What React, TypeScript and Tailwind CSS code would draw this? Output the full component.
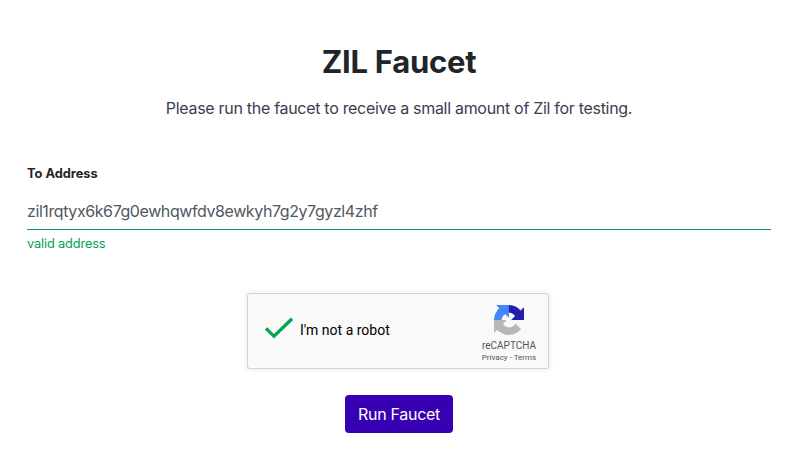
function Recaptcha() {
  return (
    <div className="flex h-[76px] w-[302px] justify-between rounded-[3px] border border-[#d3d3d3] bg-[#f9f9f9] pr-[11px] pl-4 font-[Roboto,sans-serif] shadow-[0_0_4px_1px_rgba(0,0,0,0.08)]">
      <div className="flex items-center">
        <svg className="mt-[-6px] h-[24px] w-[30px]" viewBox="0 0 30 24" fill="none" stroke="#00a651" strokeWidth="3.3" aria-hidden="true">
          <path d="M2 12.3L10 20.3L28 2.8" />
        </svg>
        <span className="mt-[-2px] ml-[6px] text-[14px] leading-[17px] text-black">I'm not a robot</span>
      </div>
      <div className="flex w-[56px] flex-col items-center pt-[11px] text-[#555]">
        <svg className="h-[30px] w-[30px]" viewBox="0 0 64 64" aria-hidden="true">
          <path fill="#221fac" d="M64 31.955c-.002-.46-.012-.918-.033-1.373V4.63l-7.174 7.174C50.893 4.617 41.961.038 31.957.038c-10.409 0-19.657 4.957-25.495 12.634l11.76 11.884a15.58 15.58 0 0 1 4.764-5.347c2.054-1.603 4.964-2.913 8.97-2.913.485 0 .859.057 1.133.163 4.965.392 9.268 3.131 11.801 7.107l-8.324 8.324z" />
          <path fill="#4287fa" d="M31.862.038c-.459.001-.916.013-1.371.034H4.537l7.174 7.174C4.524 13.116-.056 22.048-.056 32.052c0 10.409 4.958 19.657 12.634 25.495l11.884-11.76a15.58 15.58 0 0 1-5.347-4.764c-1.603-2.054-2.913-4.964-2.913-8.97 0-.485.057-.859.163-1.133.392-4.965 3.131-9.268 7.107-11.801l8.324 8.324z" />
          <path fill="#b8b8b8" d="M.038 32c.001.459.013.916.034 1.371v25.954l7.174-7.174C13.116 59.338 22.048 63.917 32.052 63.917c10.409 0 19.657-4.957 25.495-12.634L45.787 39.4a15.58 15.58 0 0 1-4.764 5.347c-2.054 1.603-4.964 2.913-8.97 2.913-.485 0-.859-.057-1.133-.163-4.965-.392-9.268-3.131-11.801-7.107l8.324-8.324z" />
        </svg>
        <span className="mt-1 text-[10px] leading-[14px]">reCAPTCHA</span>
        <span className="text-[8px] leading-[10px] whitespace-nowrap">Privacy - Terms</span>
      </div>
    </div>
  );
}

export default function App() {
  return (
    <main className="flex h-[463px] w-[796px] flex-col items-center bg-white pt-[38px] pr-[25px] pl-[27px] font-['Inter',sans-serif] text-[#212529]">
      <h1 className="h-12 whitespace-nowrap text-[31px] leading-[48px] font-bold tracking-[-0.25px]">ZIL Faucet</h1>
      <p className="mt-[10px] whitespace-nowrap text-[16px] leading-6 tracking-[-0.3px] text-[#3d3c50]">Please run the faucet to receive a small amount of Zil for testing.</p>
      <form className="flex w-full flex-col items-center">
        <div className="mt-[44px] w-full">
          <label className="block text-[12.8px] leading-5 font-bold">To Address</label>
          <input aria-label="To Address" className="mt-2 block h-[38px] w-full border-b border-[#00a152] text-[16px] tracking-[-0.41px] text-[#505860] outline-none" defaultValue="zil1rqtyx6k67g0ewhqwfdv8ewkyh7g2y7gyzl4zhf" />
          <div className="mt-1 mb-[39px] text-[12.8px] leading-5 tracking-[-0.15px] text-[#00a152]">valid address</div>
        </div>
        <div className="mr-[2px]"><Recaptcha /></div>
        <button type="button" className="mt-[26px] h-[38px] w-[108px] rounded-[4px] bg-[#3700b3] text-[16px] tracking-[-0.3px] text-white">Run Faucet</button>
      </form>
    </main>
  );
}
